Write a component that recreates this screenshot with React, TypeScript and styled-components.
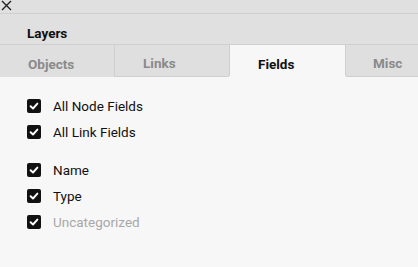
import React from "react";
import styled, { createGlobalStyle } from "styled-components";

const GlobalStyle = createGlobalStyle`
  html, body {
    margin: 0;
    padding: 0;
    background: #f7f7f7;
    font-family: Roboto, "Liberation Sans", sans-serif;
  }
`;

const Panel = styled.div`
  width: 418px;
  height: 267px;
  background: #f7f7f7;
  overflow: hidden;
`;

const TopBar = styled.div`
  height: 13px;
  background: #e0e0e0;
  border-bottom: 1px solid #cfcfcf;
  display: flex;
  align-items: flex-start;
`;

const CloseButton = styled.button`
  border: none;
  background: none;
  padding: 0 0 0 1px;
  width: 12px;
  height: 11px;
  display: flex;
  cursor: pointer;
`;

const Header = styled.div`
  height: 23px;
  background: #e0e0e0;
  border-bottom: 1px solid #cfcfcf;
  display: flex;
  align-items: center;
  padding: 7px 0 0 27px;
  font-size: 13.5px;
  font-weight: 700;
  color: #111;
`;

const TabBar = styled.div`
  display: flex;
  height: 32px;
  background: #f7f7f7;
`;

const Tab = styled.div<{ $active?: boolean; $side?: "left" | "right"; $fill?: boolean }>`
  box-sizing: border-box;
  width: ${(p) => (p.$fill ? "auto" : "115px")};
  flex: ${(p) => (p.$fill ? 1 : "none")};
  display: flex;
  align-items: center;
  padding-left: ${(p) => (p.$side === "right" ? "27px" : "28px")};
  font-size: 13.5px;
  font-weight: 700;
  color: ${(p) => (p.$active ? "#111" : "#8a8a8a")};
  background: ${(p) => (p.$active ? "#f7f7f7" : "#dfdfdf")};
  margin-top: ${(p) => (p.$active ? "2px" : "0")};
  border-radius: ${(p) => (p.$active ? "3px 3px 0 0" : p.$side === "left" ? "0 0 3px 0" : p.$side === "right" ? "0 0 0 3px" : "0")};
  border-right: ${(p) => (p.$active ? "none" : p.$side === "right" ? "none" : "1px solid #cfcfcf")};
  border-left: ${(p) => (p.$side === "right" ? "1px solid #cfcfcf" : "none")};
  border-bottom: ${(p) => (p.$side ? "1px solid #cfcfcf" : "none")};
  padding-top: ${(p) => (p.$active ? "3px" : "5px")};
`;

const List = styled.div`
  padding: 22px 0 0 27px;
  display: flex;
  flex-direction: column;
`;

const Group = styled.div`
  display: flex;
  flex-direction: column;
  gap: 12px;
  margin-bottom: 24px;
`;

const Row = styled.label<{ $muted?: boolean }>`
  display: flex;
  align-items: center;
  gap: 12px;
  height: 14px;
  font-size: 13.5px;
  color: ${(p) => (p.$muted ? "#a8a8a8" : "#111")};
`;

const Box = styled.span`
  width: 14px;
  height: 14px;
  border-radius: 2px;
  background: #111;
  display: flex;
  align-items: center;
  justify-content: center;
`;

const Check = () => (
  <Box>
    <svg width="10" height="10" viewBox="0 0 10 10">
      <path d="M1.6 5.2 L4 7.5 L8.4 2.6" fill="none" stroke="#fff" strokeWidth="1.9" strokeLinecap="round" strokeLinejoin="round" />
    </svg>
  </Box>
);

const Item = ({ label, muted }: { label: string; muted?: boolean }) => (
  <Row $muted={muted}>
    <Check />
    {label}
  </Row>
);

export default function App() {
  return (
    <Panel>
      <GlobalStyle />
      <TopBar>
        <CloseButton>
          <svg width="11" height="11" viewBox="0 0 11 11">
            <path d="M1 1 L10 10 M10 1 L1 10" stroke="#222" strokeWidth="1.4" />
          </svg>
        </CloseButton>
      </TopBar>
      <Header>Layers</Header>
      <TabBar>
        <Tab>Objects</Tab>
        <Tab $side="left">Links</Tab>
        <Tab $active>Fields</Tab>
        <Tab $side="right" $fill>Misc</Tab>
      </TabBar>
      <List>
        <Group>
          <Item label="All Node Fields" />
          <Item label="All Link Fields" />
        </Group>
        <Group>
          <Item label="Name" />
          <Item label="Type" />
          <Item label="Uncategorized" muted />
        </Group>
      </List>
    </Panel>
  );
}
